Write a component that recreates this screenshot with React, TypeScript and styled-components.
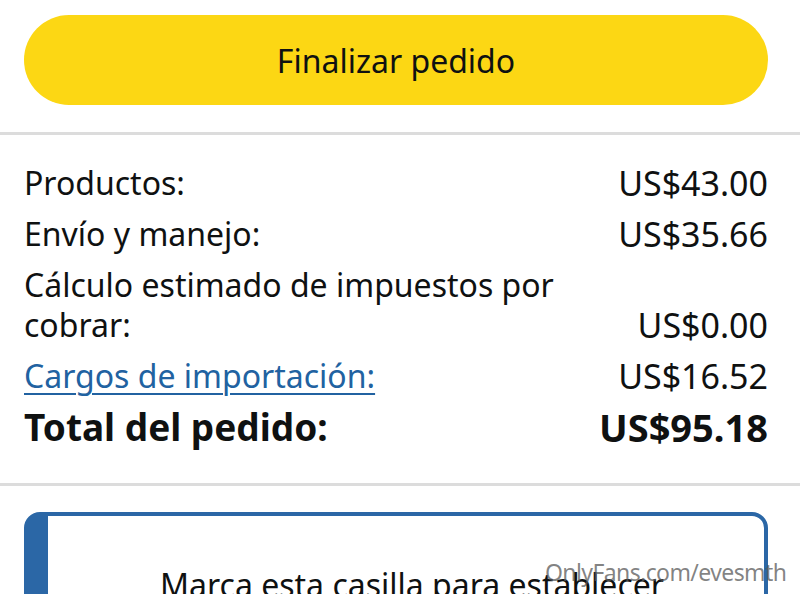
import styled, { createGlobalStyle } from "styled-components";

const GlobalStyle = createGlobalStyle`
  html, body {
    margin: 0;
    padding: 0;
    background: #ffffff;
  }
  body {
    font-family: "Noto Sans", "Open Sans", sans-serif;
    color: #0f1111;
    overflow: hidden;
  }
`;

const Page = styled.div`
  position: relative;
  width: 800px;
  height: 594px;
  overflow: hidden;
  background: #ffffff;
`;

const ButtonArea = styled.div`
  padding: 15px 32px 27px 24px;
`;

const PlaceOrderButton = styled.button`
  display: flex;
  align-items: center;
  justify-content: center;
  width: 100%;
  height: 90px;
  border: none;
  border-radius: 45px;
  background: #fcd714;
  color: #0f1111;
  font-family: "Noto Sans", sans-serif;
  font-size: 32px;
  padding: 0;
  cursor: pointer;
`;

const Divider = styled.div`
  height: 3px;
  background: #dcdcdc;
`;

const Summary = styled.div`
  display: flex;
  flex-direction: column;
  gap: 11px;
  padding: 28px 32px 36px 24px;
`;

const Row = styled.div<{ $bold?: boolean }>`
  display: flex;
  justify-content: space-between;
  align-items: flex-end;
  font-size: ${(p) => (p.$bold ? "37px" : "32px")};
  font-weight: ${(p) => (p.$bold ? 700 : 400)};
  line-height: 40px;
`;

const Label = styled.span`
  max-width: 560px;
`;

const LinkLabel = styled.a`
  color: #2162a1;
  text-decoration: underline;
  text-underline-offset: 5px;
  text-decoration-thickness: 2px;
`;

const Amount = styled.span<{ $bold?: boolean }>`
  white-space: nowrap;
  font-size: ${(p) => (p.$bold ? "38px" : "34px")};
`;

const CardArea = styled.div`
  padding: 26px 32px 0 24px;
`;

const Card = styled.div`
  height: 140px;
  border: 4px solid #2b67a6;
  border-left-width: 24px;
  border-radius: 16px;
  padding: 47px 0 0 112px;
`;

const CardText = styled.p`
  margin: 0;
  font-family: "Noto Sans", sans-serif;
  font-size: 32px;
  color: #0f1111;
`;

const Watermark = styled.span`
  position: absolute;
  left: 545px;
  top: 556px;
  font-family: "Noto Sans", sans-serif;
  font-size: 23px;
  color: rgba(90, 90, 90, 0.75);
  letter-spacing: -0.6px;
`;

const rows = [
  { label: "Productos:", amount: "US$43.00" },
  { label: "Envío y manejo:", amount: "US$35.66" },
  { label: "Cálculo estimado de impuestos por cobrar:", amount: "US$0.00" },
];

export default function App() {
  return (
    <Page>
      <GlobalStyle />
      <ButtonArea>
        <PlaceOrderButton>Finalizar pedido</PlaceOrderButton>
      </ButtonArea>
      <Divider />
      <Summary>
        {rows.map((row) => (
          <Row key={row.label}>
            <Label>{row.label}</Label>
            <Amount>{row.amount}</Amount>
          </Row>
        ))}
        <Row>
          <LinkLabel href="#">Cargos de importación:</LinkLabel>
          <Amount>US$16.52</Amount>
        </Row>
        <Row $bold>
          <Label>Total del pedido:</Label>
          <Amount $bold>US$95.18</Amount>
        </Row>
      </Summary>
      <Divider />
      <CardArea>
        <Card>
          <CardText>Marca esta casilla para establecer</CardText>
        </Card>
      </CardArea>
      <Watermark>OnlyFans.com/evesmth</Watermark>
    </Page>
  );
}
